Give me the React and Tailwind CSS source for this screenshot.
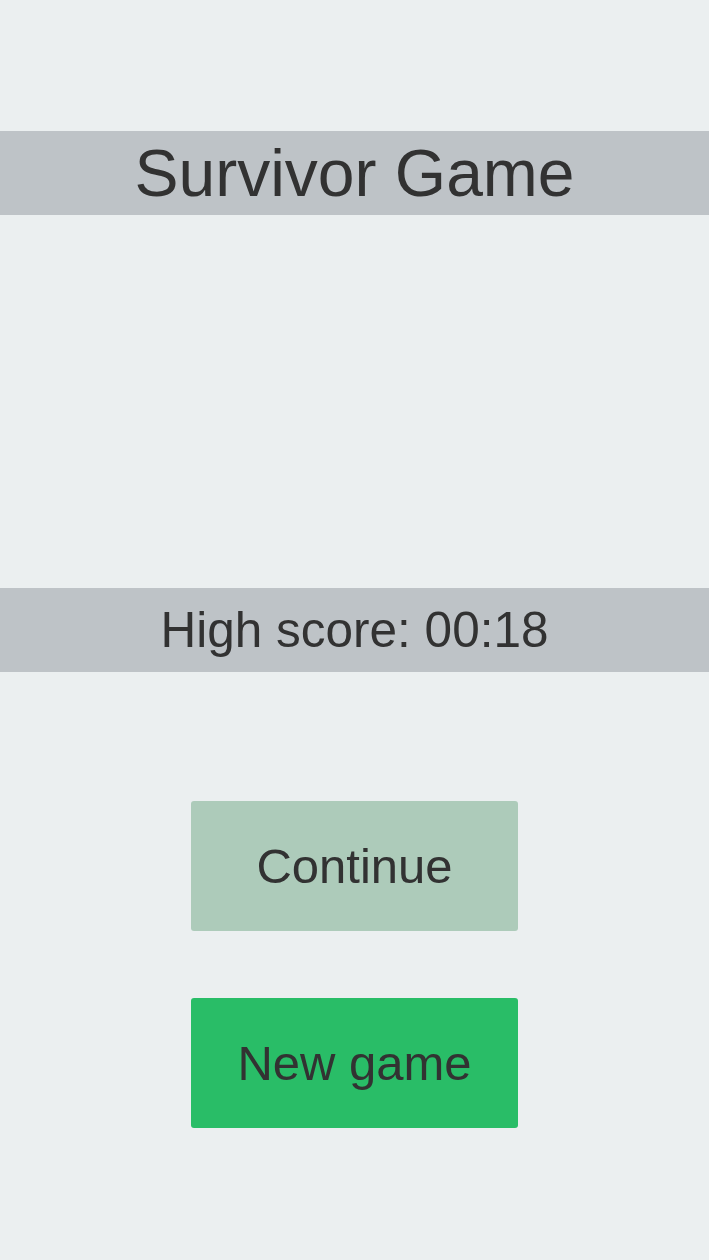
export default function App() {
  return (
    <div
      className="min-h-[1260px] w-full bg-[#ebeff0] flex flex-col items-center text-[#323232]"
      style={{ fontFamily: '"Liberation Sans", Arial, sans-serif' }}
    >
      {/* Title */}
      <div className="mt-[131px] w-full h-[84px] bg-[#bec3c7] flex items-center justify-center">
        <h1 className="text-[66px] leading-none">Survivor Game</h1>
      </div>

      {/* High score */}
      <div className="mt-[373px] w-full h-[84px] bg-[#bec3c7] flex items-center justify-center">
        <p className="text-[49.5px] leading-none">High score: 00:18</p>
      </div>

      {/* Buttons */}
      <button className="mt-[129px] w-[327px] h-[130px] rounded-[3px] bg-[#adcbba] text-[49px] leading-none text-[#323232]">
        Continue
      </button>
      <button className="mt-[67px] w-[327px] h-[130px] rounded-[3px] bg-[#29bd67] text-[49px] leading-none text-[#323232]">
        New game
      </button>
    </div>
  );
}
